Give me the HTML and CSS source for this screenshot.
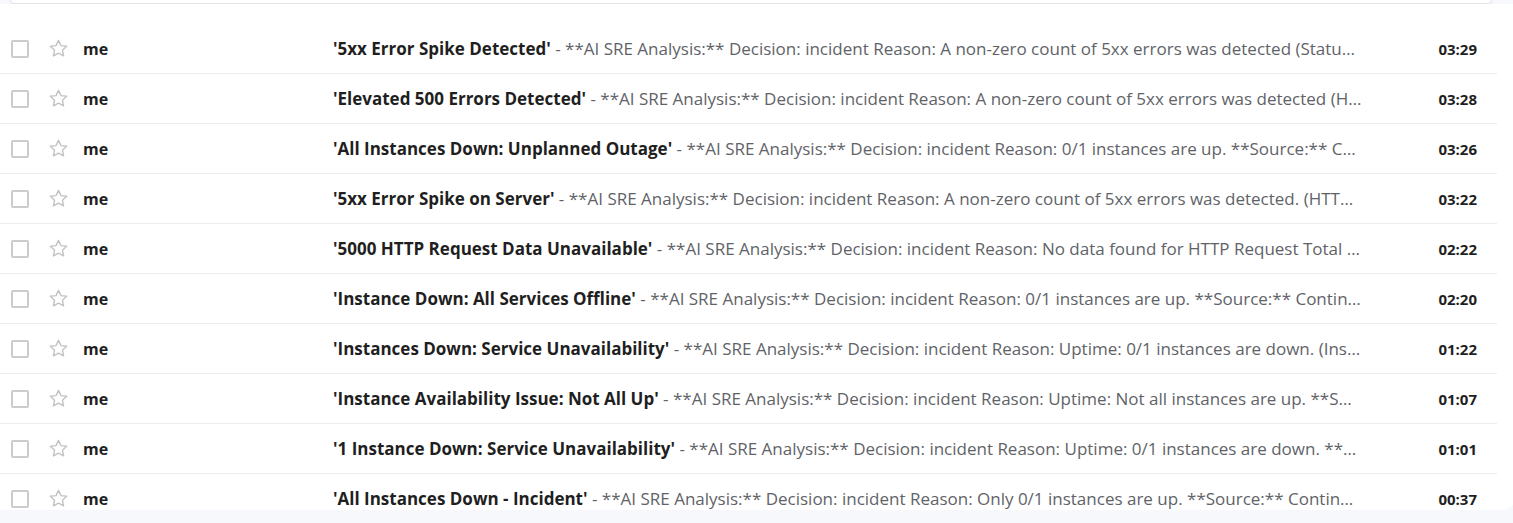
FILE: index.html
```html
<!DOCTYPE html>
<html lang="en">
<head>
<meta charset="utf-8">
<title>Inbox</title>
<link rel="stylesheet" href="styles.css">
</head>
<body>
<div class="page">
  <div class="topcard"></div>
  <div class="panel">
    <ul class="list">
      <li class="row"><span class="cb"></span><span class="star"><svg viewBox="0 0 24 24"><path d="M12 3.5l2.6 5.5 6 .7-4.5 4.1 1.2 5.9L12 16.8l-5.3 2.9 1.2-5.9-4.5-4.1 6-.7z"/></svg></span><span class="from">me</span><span class="body"><b>'5xx Error Spike Detected'</b> - **AI SRE Analysis:** Decision: incident Reason: A non-zero count of 5xx errors was detected (Status code 5xx count: 1) **Source:** Continuous monitoring</span><span class="time">03:29</span></li>
      <li class="row"><span class="cb"></span><span class="star"><svg viewBox="0 0 24 24"><path d="M12 3.5l2.6 5.5 6 .7-4.5 4.1 1.2 5.9L12 16.8l-5.3 2.9 1.2-5.9-4.5-4.1 6-.7z"/></svg></span><span class="from">me</span><span class="body"><b>'Elevated 500 Errors Detected'</b> - **AI SRE Analysis:** Decision: incident Reason: A non-zero count of 5xx errors was detected (HTTP 500 count: 1) **Source:** Continuous monitoring</span><span class="time">03:28</span></li>
      <li class="row"><span class="cb"></span><span class="star"><svg viewBox="0 0 24 24"><path d="M12 3.5l2.6 5.5 6 .7-4.5 4.1 1.2 5.9L12 16.8l-5.3 2.9 1.2-5.9-4.5-4.1 6-.7z"/></svg></span><span class="from">me</span><span class="body"><b>'All Instances Down: Unplanned Outage'</b> - **AI SRE Analysis:** Decision: incident Reason: 0/1 instances are up. **Source:** Continuous monitoring</span><span class="time">03:26</span></li>
      <li class="row"><span class="cb"></span><span class="star"><svg viewBox="0 0 24 24"><path d="M12 3.5l2.6 5.5 6 .7-4.5 4.1 1.2 5.9L12 16.8l-5.3 2.9 1.2-5.9-4.5-4.1 6-.7z"/></svg></span><span class="from">me</span><span class="body"><b>'5xx Error Spike on Server'</b> - **AI SRE Analysis:** Decision: incident Reason: A non-zero count of 5xx errors was detected. (HTTP 5xx count: 1) **Source:** Continuous monitoring</span><span class="time">03:22</span></li>
      <li class="row"><span class="cb"></span><span class="star"><svg viewBox="0 0 24 24"><path d="M12 3.5l2.6 5.5 6 .7-4.5 4.1 1.2 5.9L12 16.8l-5.3 2.9 1.2-5.9-4.5-4.1 6-.7z"/></svg></span><span class="from">me</span><span class="body"><b>'5000 HTTP Request Data Unavailable'</b> - **AI SRE Analysis:** Decision: incident Reason: No data found for HTTP Request Total metric **Source:** Continuous monitoring</span><span class="time">02:22</span></li>
      <li class="row"><span class="cb"></span><span class="star"><svg viewBox="0 0 24 24"><path d="M12 3.5l2.6 5.5 6 .7-4.5 4.1 1.2 5.9L12 16.8l-5.3 2.9 1.2-5.9-4.5-4.1 6-.7z"/></svg></span><span class="from">me</span><span class="body"><b>'Instance Down: All Services Offline'</b> - **AI SRE Analysis:** Decision: incident Reason: 0/1 instances are up. **Source:** Continuous monitoring</span><span class="time">02:20</span></li>
      <li class="row"><span class="cb"></span><span class="star"><svg viewBox="0 0 24 24"><path d="M12 3.5l2.6 5.5 6 .7-4.5 4.1 1.2 5.9L12 16.8l-5.3 2.9 1.2-5.9-4.5-4.1 6-.7z"/></svg></span><span class="from">me</span><span class="body"><b>'Instances Down: Service Unavailability'</b> - **AI SRE Analysis:** Decision: incident Reason: Uptime: 0/1 instances are down. (Instances up: 0) **Source:** Continuous monitoring</span><span class="time">01:22</span></li>
      <li class="row"><span class="cb"></span><span class="star"><svg viewBox="0 0 24 24"><path d="M12 3.5l2.6 5.5 6 .7-4.5 4.1 1.2 5.9L12 16.8l-5.3 2.9 1.2-5.9-4.5-4.1 6-.7z"/></svg></span><span class="from">me</span><span class="body"><b>'Instance Availability Issue: Not All Up'</b> - **AI SRE Analysis:** Decision: incident Reason: Uptime: Not all instances are up. **Source:** Continuous monitoring</span><span class="time">01:07</span></li>
      <li class="row"><span class="cb"></span><span class="star"><svg viewBox="0 0 24 24"><path d="M12 3.5l2.6 5.5 6 .7-4.5 4.1 1.2 5.9L12 16.8l-5.3 2.9 1.2-5.9-4.5-4.1 6-.7z"/></svg></span><span class="from">me</span><span class="body"><b>'1 Instance Down: Service Unavailability'</b> - **AI SRE Analysis:** Decision: incident Reason: Uptime: 0/1 instances are down. **Source:** Continuous monitoring</span><span class="time">01:01</span></li>
      <li class="row"><span class="cb"></span><span class="star"><svg viewBox="0 0 24 24"><path d="M12 3.5l2.6 5.5 6 .7-4.5 4.1 1.2 5.9L12 16.8l-5.3 2.9 1.2-5.9-4.5-4.1 6-.7z"/></svg></span><span class="from">me</span><span class="body"><b>'All Instances Down - Incident'</b> - **AI SRE Analysis:** Decision: incident Reason: Only 0/1 instances are up. **Source:** Continuous monitoring</span><span class="time">00:37</span></li>
    </ul>
  </div>
</div>
</body>
</html>
```

FILE: styles.css
```css
html, body {
  margin: 0;
  padding: 0;
  background: #f6f8fc;
  overflow: hidden;
}
body {
  font-family: "Open Sans", "Liberation Sans", Arial, sans-serif;
  width: 1513px;
  height: 523px;
}
.page {
  width: 1517px;
  background: #f6f8fc;
}
.topcard {
  height: 4px;
  margin: 0 25px 0 10px;
  background: #fff;
  border: 1px solid #e3e3e3;
  border-top: none;
  border-radius: 0 0 8px 8px;
  box-sizing: border-box;
}
.panel {
  background: #fff;
  height: 506px;
  border-radius: 0 0 16px 0;
  padding-top: 20px;
  box-sizing: border-box;
  overflow: hidden;
}
.list {
  list-style: none;
  margin: 0;
  padding: 0;
  width: 1497px;
}
.row {
  display: flex;
  align-items: center;
  height: 50px;
  border-bottom: 1px solid #ececec;
  box-sizing: border-box;
  font-size: 17px;
  color: #1f1f1f;
}
.cb {
  width: 14px;
  height: 14px;
  border: 2px solid #cccccc;
  border-radius: 2px;
  margin-left: 11px;
  flex: none;
}
.star {
  width: 23px;
  height: 23px;
  margin-left: 18px;
  flex: none;
  display: flex;
}
.star svg {
  width: 23px;
  height: 23px;
  fill: none;
  stroke: #c4c4c4;
  stroke-width: 1.5;
  stroke-linejoin: round;
}
.from {
  font-weight: 700;
  font-size: 16px;
  width: 250px;
  margin-left: 13px;
  flex: none;
}
.body {
  flex: 1;
  min-width: 0;
  white-space: nowrap;
  overflow: hidden;
  text-overflow: ellipsis;
  color: #5f6368;
}
.body b {
  color: #1f1f1f;
  font-weight: 700;
}
.time {
  flex: none;
  width: 95px;
  margin-left: 40px;
  text-align: right;
  padding-right: 20px;
  box-sizing: border-box;
  font-weight: 700;
  font-size: 15px;
}
```
